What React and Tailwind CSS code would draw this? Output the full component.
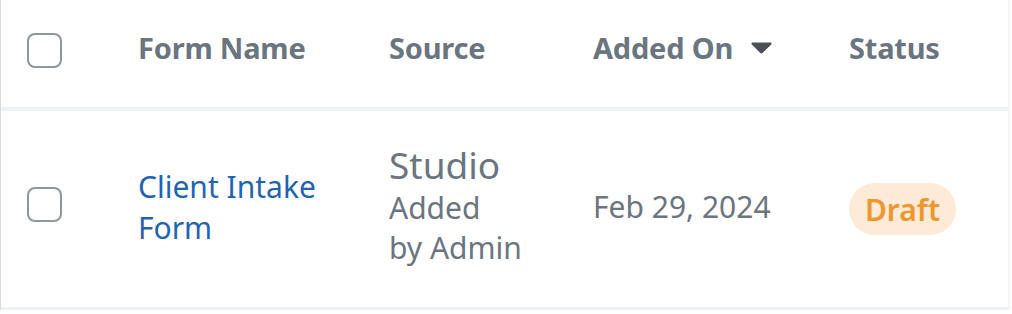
import React from 'react';

const Checkbox = ({ className = '' }) => (
  <span className={`block w-[35px] h-[35px] rounded-[8px] border-2 border-[#8e969e] bg-white ${className}`} />
);

const Caret = () => (
  <svg width="21" height="12" viewBox="0 0 21 12" className="ml-[18px]">
    <path d="M1.6 0.5h17.8c1 0 1.5 1.2.8 1.9l-8.7 8.7c-.6.6-1.6.6-2.2 0L.8 2.4C.1 1.7.6.5 1.6.5z" fill="#4b5058" />
  </svg>
);

export default function App() {
  return (
    <div className="w-[1012px] h-[314px] bg-white font-['Noto_Sans',sans-serif] overflow-hidden">
      <div className="w-[1010px] border-l border-l-[#d9dcdf] border-r-2 border-r-[#f5f6f8]">
        {/* header */}
        <div className="flex items-center h-[111px] border-b-4 border-[#eef1f6] text-[29px] font-bold tracking-[-0.2px] text-[#6b7580]">
          <div className="w-[137px] pl-[26px] shrink-0 mb-[7px]">
            <Checkbox />
          </div>
          <div className="w-[251px] shrink-0 mb-[11px]">Form Name</div>
          <div className="w-[204px] shrink-0 mb-[11px]">Source</div>
          <div className="w-[256px] shrink-0 flex items-center mb-[11px]">
            Added On
            <Caret />
          </div>
          <div className="mb-[11px]">Status</div>
        </div>

        {/* row */}
        <div className="flex items-center h-[199px] border-b-[3px] border-[#eef1f6] text-[30px] text-[#6b7580]">
          <div className="w-[137px] pl-[26px] shrink-0 mb-[9px]">
            <Checkbox />
          </div>
          <div className="w-[251px] shrink-0 text-[#1f64b3] leading-[41px] mb-[4px]">
            Client Intake<br />Form
          </div>
          <div className="w-[204px] shrink-0 mb-[8px]">
            <div className="text-[37px] leading-[46px]">Studio</div>
            <div className="leading-[40px]">Added<br />by Admin</div>
          </div>
          <div className="w-[256px] shrink-0 mb-[5px]">Feb 29, 2024</div>
          <div>
            <span className="inline-flex items-center justify-center w-[107px] h-[52px] rounded-full bg-[#fdebd8] text-[#f0962e] font-semibold">
              Draft
            </span>
          </div>
        </div>
      </div>
    </div>
  );
}
